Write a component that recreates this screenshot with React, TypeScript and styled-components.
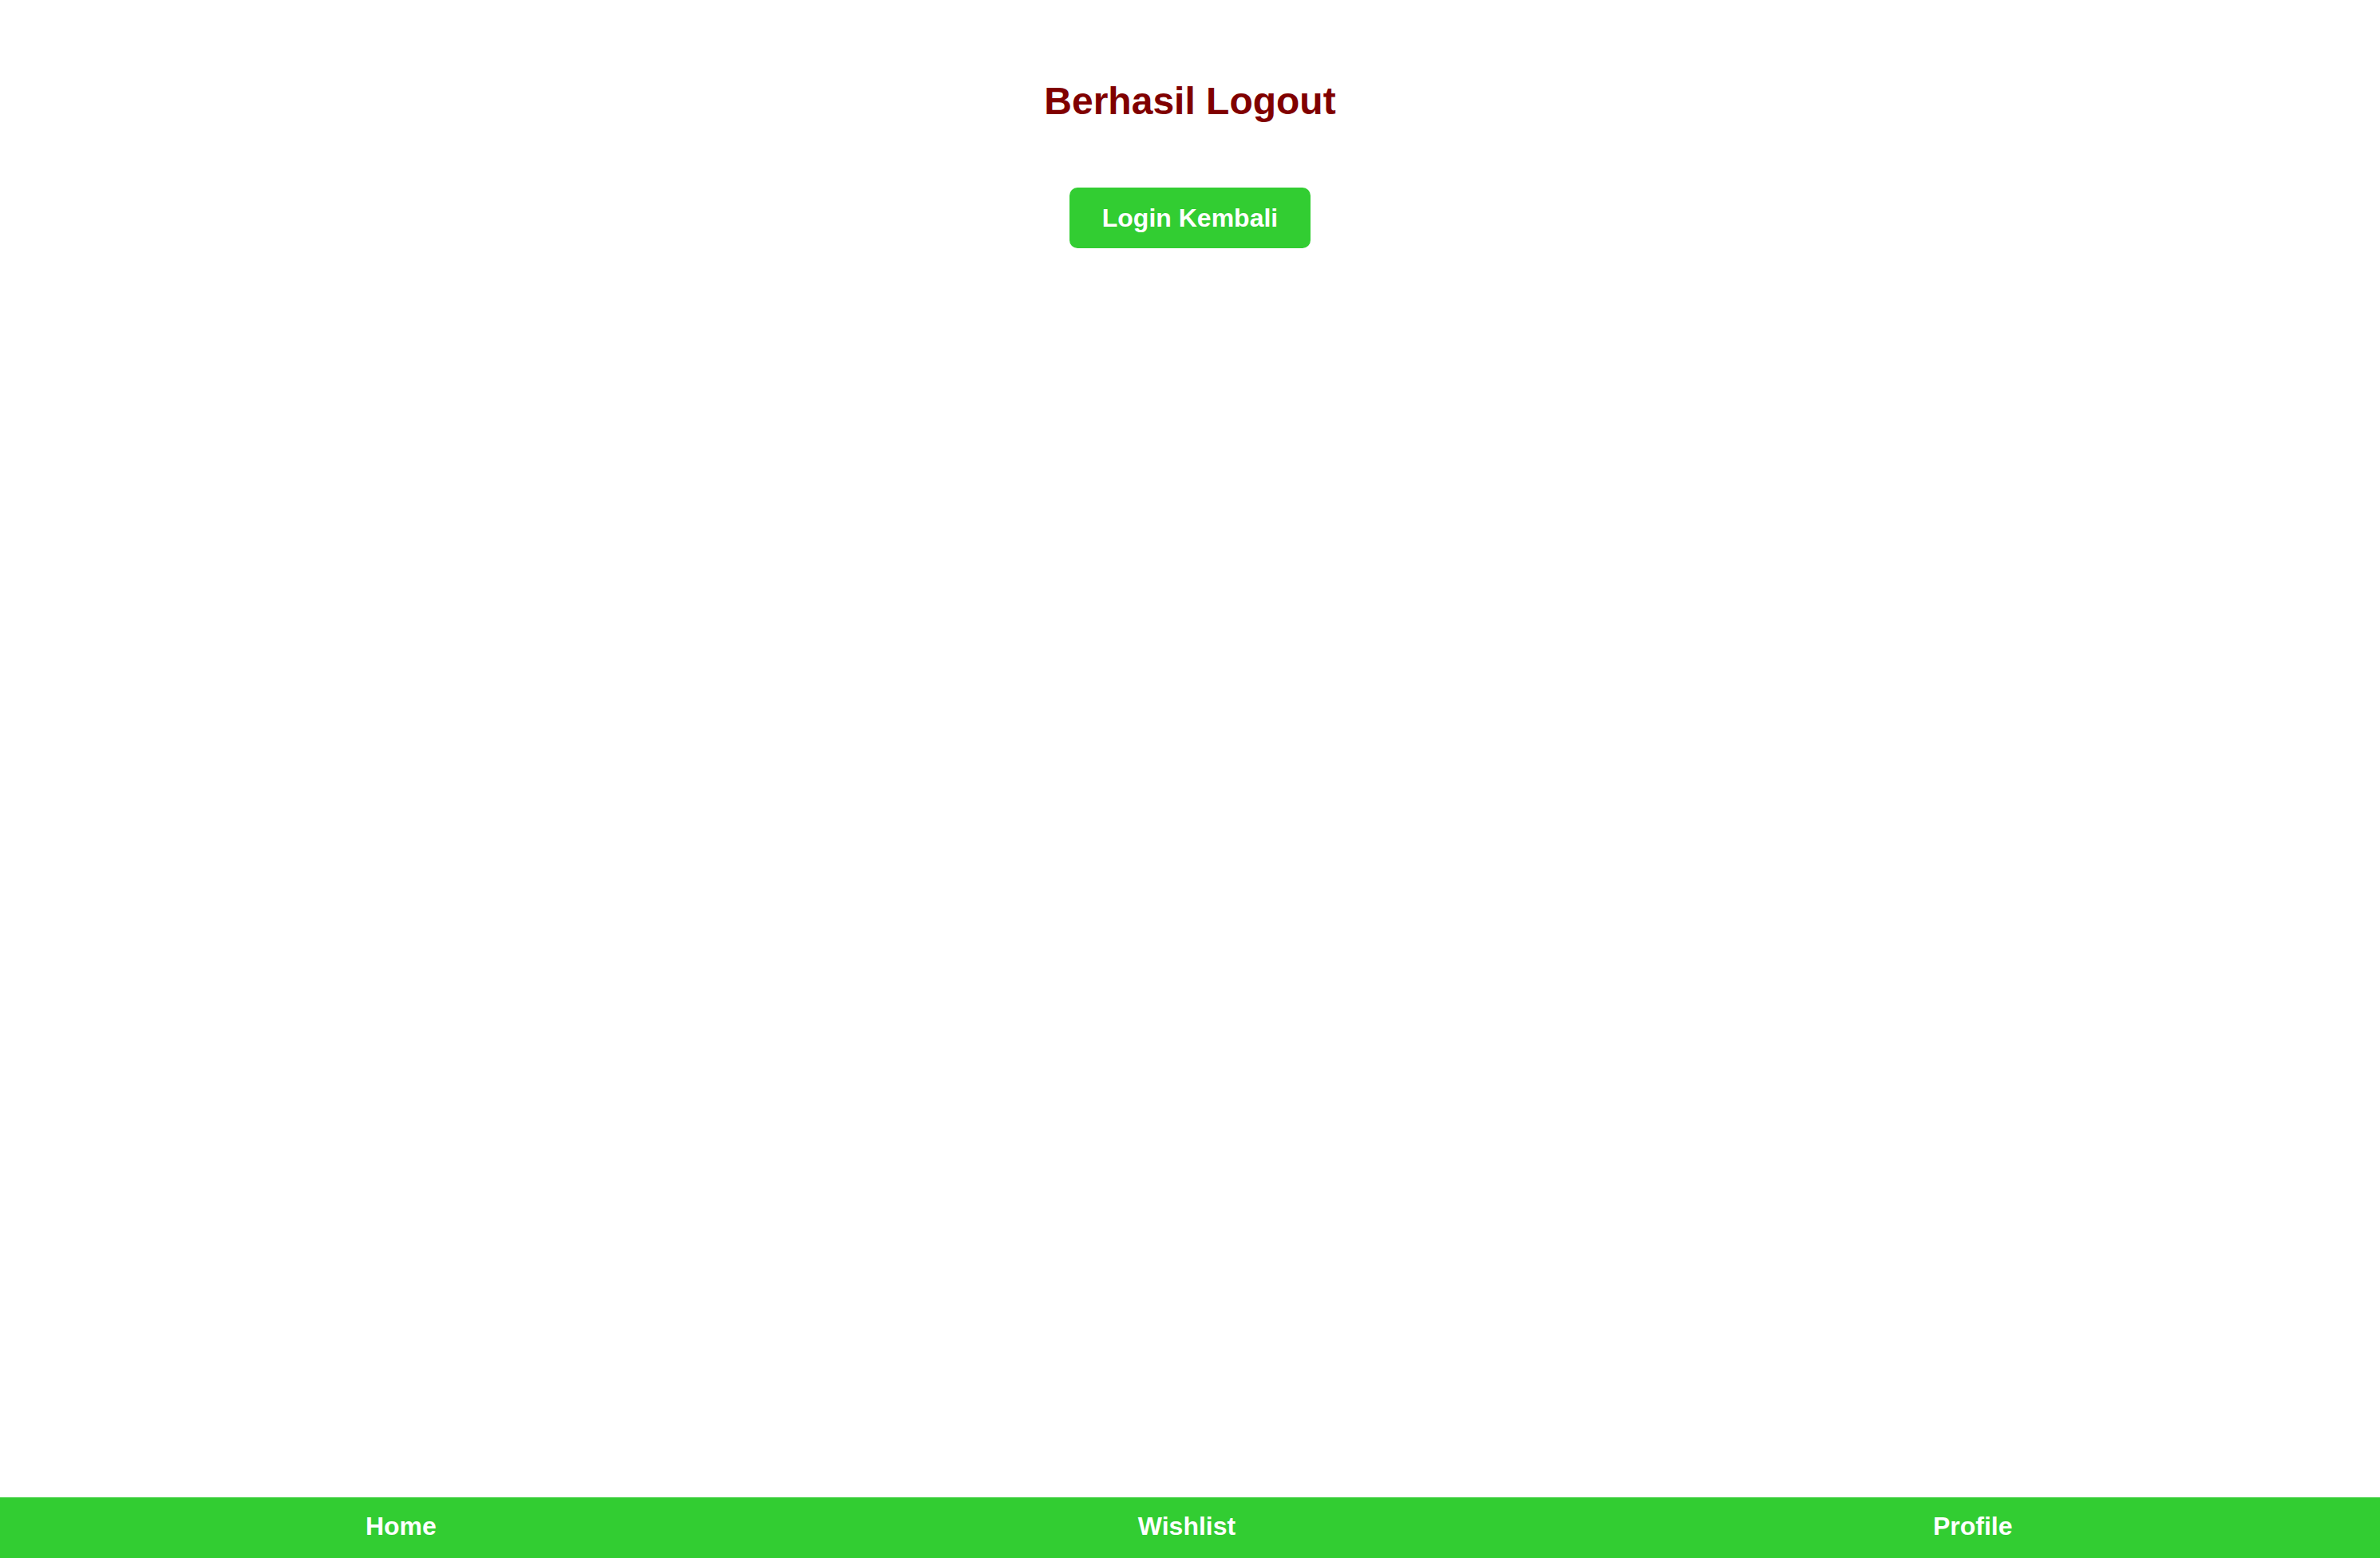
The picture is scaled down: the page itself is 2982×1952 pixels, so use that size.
import React from 'react';
import styled, { createGlobalStyle } from 'styled-components';

const GlobalStyle = createGlobalStyle`
  html, body {
    margin: 0;
    padding: 0;
    background: #ffffff;
    font-family: "Liberation Sans", Arial, sans-serif;
  }
`;

const Page = styled.main`
  min-height: 100vh;
  box-sizing: border-box;
  display: flex;
  flex-direction: column;
  align-items: center;
  gap: 81px;
  padding-top: 99px;
  padding-bottom: 76px;
`;

const Title = styled.h1`
  margin: 0;
  font-size: 48px;
  font-weight: bold;
  color: #800000;
`;

const LoginButton = styled.button`
  border: 0;
  border-radius: 10px;
  background: #32cd32;
  color: #ffffff;
  font-family: inherit;
  font-size: 32px;
  font-weight: bold;
  line-height: 36px;
  padding: 20px 41px;
  cursor: pointer;
`;

const BottomNav = styled.nav`
  position: fixed;
  left: 0;
  right: 0;
  bottom: 0;
  height: 76px;
  box-sizing: border-box;
  background: #32cd32;
  display: grid;
  grid-template-columns: repeat(3, 1fr);
  align-items: center;
  padding: 0 18px 3px 10px;
`;

const NavLink = styled.a`
  justify-self: center;
  color: #ffffff;
  font-size: 32px;
  font-weight: bold;
  text-decoration: none;
  cursor: pointer;
`;

const links = ['Home', 'Wishlist', 'Profile'];

export default function App() {
  return (
    <>
      <GlobalStyle />
      <Page>
        <Title>Berhasil Logout</Title>
        <LoginButton type="button">Login Kembali</LoginButton>
      </Page>
      <BottomNav>
        {links.map((label) => (
          <NavLink key={label}>{label}</NavLink>
        ))}
      </BottomNav>
    </>
  );
}
